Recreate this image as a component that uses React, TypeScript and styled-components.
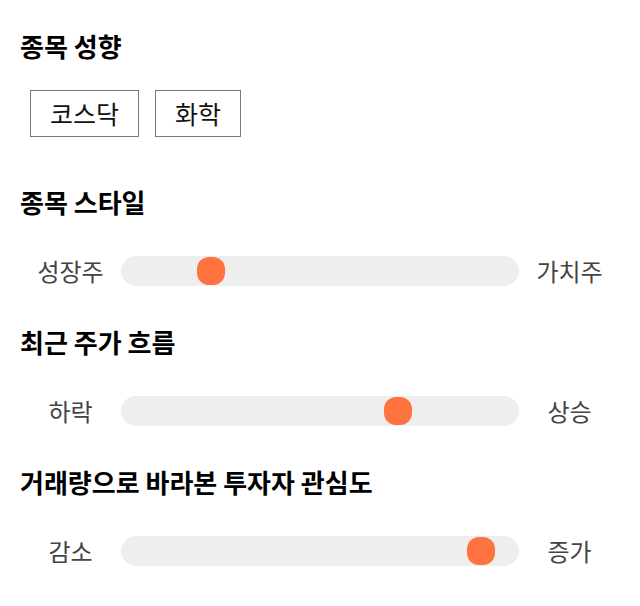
import React from "react";
import styled, { createGlobalStyle } from "styled-components";

const GlobalStyle = createGlobalStyle`
  html, body { margin: 0; padding: 0; background: #ffffff; }
  body { font-family: "Noto Sans CJK KR", "Noto Sans", sans-serif; }
`;

const Page = styled.div`
  width: 640px;
  box-sizing: border-box;
  padding: 30px 20px 0 20px;
  display: flex;
  flex-direction: column;
`;

const Section = styled.section<{ $gap: number; $after: number }>`
  display: flex;
  flex-direction: column;
  gap: ${(p) => p.$gap}px;
  margin-bottom: ${(p) => p.$after}px;
`;

const Title = styled.h2`
  margin: 0;
  height: 32px;
  line-height: 32px;
  font-size: 26px;
  font-weight: 700;
  color: #000;
`;

const ButtonRow = styled.div`
  display: flex;
  gap: 16px;
  padding-left: 10px;
`;

const Chip = styled.button`
  height: 47px;
  box-sizing: border-box;
  padding: 0 19px;
  border: 1px solid #7a7a7a;
  background: #fff;
  font-family: inherit;
  font-size: 25px;
  color: #111;
  line-height: 1;
  cursor: pointer;
`;

const SliderRow = styled.div`
  display: grid;
  grid-template-columns: 101px 398px 101px;
  align-items: center;
  height: 30px;
`;

const SideLabel = styled.span`
  text-align: center;
  font-size: 24px;
  color: #444;
  line-height: 30px;
`;

const Track = styled.div`
  position: relative;
  height: 30px;
  border-radius: 15px;
  background: #eeeeee;
`;

const Thumb = styled.div`
  position: absolute;
  top: 1px;
  width: 28px;
  height: 28px;
  border-radius: 12px;
  background: #ff7340;
`;

const Slider = ({ left, right, center }: { left: string; right: string; center: number }) => (
  <SliderRow>
    <SideLabel>{left}</SideLabel>
    <Track>
      <Thumb style={{ left: `${center - 14}px` }} />
    </Track>
    <SideLabel>{right}</SideLabel>
  </SliderRow>
);

export default function App() {
  return (
    <>
      <GlobalStyle />
      <Page>
        <Section $gap={28} $after={49}>
          <Title>종목 성향</Title>
          <ButtonRow>
            <Chip>코스닥</Chip>
            <Chip>화학</Chip>
          </ButtonRow>
        </Section>
        <Section $gap={38} $after={40}>
          <Title>종목 스타일</Title>
          <Slider left="성장주" right="가치주" center={90} />
        </Section>
        <Section $gap={38} $after={40}>
          <Title>최근 주가 흐름</Title>
          <Slider left="하락" right="상승" center={277} />
        </Section>
        <Section $gap={38} $after={40}>
          <Title>거래량으로 바라본 투자자 관심도</Title>
          <Slider left="감소" right="증가" center={360} />
        </Section>
      </Page>
    </>
  );
}
